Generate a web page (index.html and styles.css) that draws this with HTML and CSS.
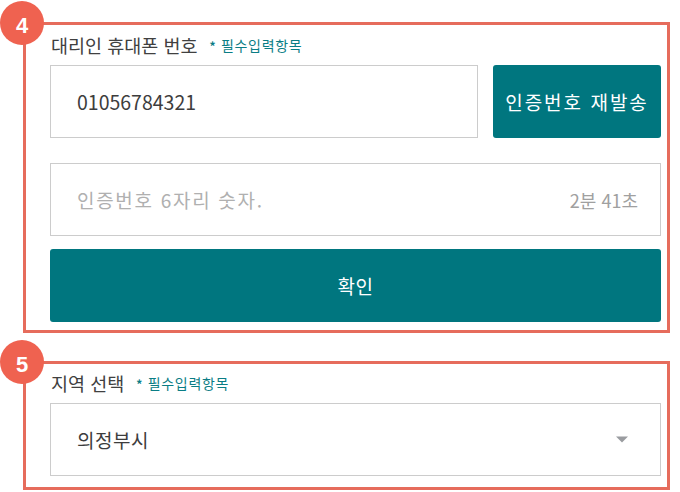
FILE: index.html
```html
<!DOCTYPE html>
<html lang="ko">
<head>
<meta charset="utf-8">
<link rel="stylesheet" href="styles.css">
</head>
<body>
<div class="page">
  <section class="field field-phone">
    <span class="badge">4</span>
    <div class="box">
      <div class="label-row">
        <span class="label">대리인 휴대폰 번호</span>
        <span class="req"><span class="star">*</span> 필수입력항목</span>
      </div>
      <div class="row">
        <div class="input input-phone"><span class="value digits">01056784321</span></div>
        <button class="btn btn-resend">인증번호 재발송</button>
      </div>
      <div class="input input-code">
        <span class="placeholder">인증번호 6자리 숫자.</span>
        <span class="timer">2분 41초</span>
      </div>
      <button class="btn btn-confirm">확인</button>
    </div>
  </section>
  <section class="field field-region">
    <span class="badge">5</span>
    <div class="box box-region">
      <div class="label-row">
        <span class="label">지역 선택</span>
        <span class="req"><span class="star">*</span> 필수입력항목</span>
      </div>
      <div class="input select">
        <span class="value city">의정부시</span>
        <svg class="caret" width="12" height="7" viewBox="0 0 12 7"><path d="M0 0.5 H12 L6 6.5 Z" fill="#9a9ca0"/></svg>
      </div>
    </div>
  </section>
</div>
</body>
</html>
```
FILE: styles.css
```css
* { box-sizing: border-box; }
html, body {
  margin: 0;
  padding: 0;
  background: #ffffff;
}
body {
  font-family: "Noto Sans CJK KR", "Noto Sans", sans-serif;
  color: #333333;
}
.page {
  display: flex;
  flex-direction: column;
  gap: 28px;
  padding: 22px 10px 0 23px;
}
.field {
  position: relative;
}
.badge {
  position: absolute;
  left: -23px;
  top: -21px;
  width: 44px;
  height: 44px;
  border-radius: 50%;
  background: #ef6250;
  color: #ffffff;
  font-family: "Liberation Sans", Arial, sans-serif;
  font-weight: bold;
  font-size: 22px;
  display: flex;
  align-items: center;
  justify-content: center;
  padding-top: 5px;
  z-index: 2;
}
.box {
  width: 647px;
  border: 3px solid #e66c5c;
  padding: 8px 6px 8px 24px;
  display: flex;
  flex-direction: column;
}
.box-region {
  padding: 7px 6px 11px 24px;
}
.label-row {
  height: 24px;
  display: flex;
  align-items: center;
  margin-bottom: 8px;
  padding-left: 1px;
}
.label {
  font-size: 18.5px;
  color: #404040;
}
.req {
  margin-left: 12px;
  font-size: 14px;
  color: #0a7d85;
  letter-spacing: 0.7px;
}
.star {
  font-size: 12px;
  font-weight: bold;
}
.row {
  display: flex;
  gap: 15px;
  margin-bottom: 25px;
}
.input {
  height: 73px;
  border: 1px solid #cccccc;
  background: #ffffff;
  display: flex;
  align-items: center;
  padding: 0 22px 0 26px;
  font-size: 19px;
}
.input-phone {
  flex: 1;
}
.value {
  color: #3d3d3d;
}
.digits {
  font-size: 19.5px;
}
.city {
  letter-spacing: 0.5px;
}
.placeholder {
  flex: 1;
  color: #b0b0b0;
  letter-spacing: 1.7px;
}
.timer {
  color: #a0a0a0;
  font-size: 18px;
}
.btn {
  border: none;
  border-radius: 3px;
  background: #00767f;
  color: #ffffff;
  font-family: inherit;
  font-size: 19px;
  height: 73px;
  cursor: pointer;
}
.btn-resend {
  width: 168px;
  padding: 0;
  letter-spacing: 2px;
}
.btn-confirm {
  margin-top: 13px;
  width: 100%;
  letter-spacing: 0.5px;
}
.select {
  justify-content: space-between;
  padding-right: 32px;
}
.caret {
  display: block;
}
```
